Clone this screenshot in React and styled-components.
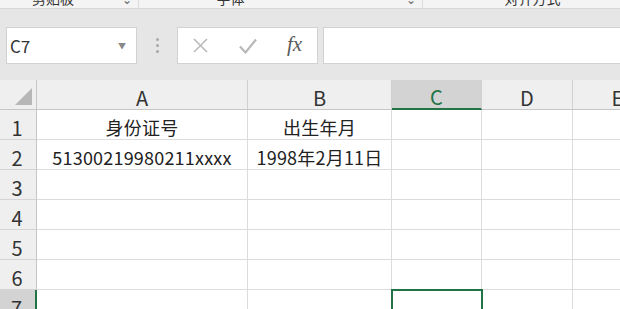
import styled, { createGlobalStyle } from 'styled-components';

const GlobalStyle = createGlobalStyle`
    body {
        margin: 0;
        overflow: hidden;
        background: #ffffff;
        font-family: "Noto Sans CJK SC", "Liberation Sans", sans-serif;
    }
`;

const Page = styled.div`
    width: 620px;
    height: 309px;
    overflow: hidden;
    background: #e6e6e6;
`;

const RibbonStrip = styled.div`
    display: flex;
    height: 8px;
    overflow: hidden;
    background: #f4f4f4;
    border-bottom: 1px solid #d6d6d6;
`;

const RibbonGroup = styled.div`
    position: relative;
    flex: 0 0 ${props => props.width}px;
    display: flex;
    justify-content: center;
    border-right: 1px solid #dcdcdc;
    span {
        margin-top: -10px;
        margin-left: ${props => props.shift || 0}px;
        font-size: 14px;
        line-height: 16px;
        color: #333;
    }
    i {
        position: absolute;
        right: 6px;
        top: -9px;
        font-style: normal;
        font-size: 12px;
        line-height: 16px;
        color: #666;
    }
`;

const Toolbar = styled.div`
    display: flex;
    align-items: stretch;
    height: 37px;
    padding: 18px 0 16px 6px;
`;

const NameBox = styled.div`
    width: 131px;
    box-sizing: border-box;
    display: flex;
    align-items: center;
    justify-content: space-between;
    padding: 0 10px 0 3px;
    background: #ffffff;
    border: 1px solid #d2d2d2;
    font-size: 17px;
    color: #333;
    span { font-size: 8px; color: #888; }
`;

const Dots = styled.div`
    width: 40px;
    display: flex;
    flex-direction: column;
    align-items: center;
    justify-content: center;
    gap: 3px;
    b {
        width: 3px;
        height: 3px;
        border-radius: 50%;
        background: #a8a8a8;
    }
`;

const FuncBox = styled.div`
    width: 141px;
    box-sizing: border-box;
    display: flex;
    align-items: center;
    gap: 31px;
    padding-left: 15px;
    background: #ffffff;
    border: 1px solid #d2d2d2;
    svg { flex: none; }
`;

const Fx = styled.span`
    font-family: "Liberation Serif", serif;
    font-style: italic;
    font-size: 21px;
    color: #5a5a5a;
    margin-left: -1px;
    margin-top: -2px;
`;

const FormulaBar = styled.div`
    flex: 1;
    margin-left: 5px;
    background: #ffffff;
    border: 1px solid #d2d2d2;
    border-right: none;
`;

const Sheet = styled.div`
    display: grid;
    grid-template-columns: 37px 211px 144px 90px 91px 90px;
    grid-auto-rows: 30px;
    background: #ffffff;
`;

const ColHead = styled.div`
    box-sizing: border-box;
    display: flex;
    align-items: center;
    justify-content: center;
    padding-top: 5px;
    background: ${props => props.active ? '#d3d3d3' : '#efefef'};
    border-right: 1px solid #d0d0d0;
    border-bottom: ${props => props.active ? '2px solid #217346' : '1px solid #c6c6c6'};
    font-size: 20px;
    color: ${props => props.active ? '#217346' : '#333'};
`;

const Corner = styled.div`
    box-sizing: border-box;
    display: flex;
    align-items: flex-end;
    justify-content: flex-end;
    padding: 0 4px 4px 0;
    background: #efefef;
    border-right: 1px solid #c6c6c6;
    border-bottom: 1px solid #c6c6c6;
`;

const RowHead = styled.div`
    box-sizing: border-box;
    display: flex;
    align-items: center;
    justify-content: center;
    padding: 5px 2px 0 0;
    background: ${props => props.active ? '#d3d3d3' : '#efefef'};
    border-right: ${props => props.active ? '2px solid #217346' : '1px solid #c6c6c6'};
    border-bottom: 1px solid #d4d4d4;
    font-size: 20px;
    color: #333;
`;

const Cell = styled.div`
    box-sizing: border-box;
    display: flex;
    align-items: center;
    justify-content: center;
    padding-top: 4px;
    border-right: 1px solid #dcdcdc;
    border-bottom: 1px solid #dcdcdc;
    font-size: 18px;
    letter-spacing: 0.2px;
    color: #222;
    white-space: nowrap;
    position: relative;
    outline: ${props => props.selected ? '2px solid #217346' : 'none'};
    outline-offset: -1px;
    z-index: ${props => props.selected ? 1 : 0};
`;

const cols = ['A', 'B', 'C', 'D', 'E'];
const data = {
    1: ['身份证号', '出生年月'],
    2: ['51300219980211xxxx', '1998年2月11日'],
};

export default function App() {
    return (
        <Page>
            <GlobalStyle />
            <RibbonStrip>
                <RibbonGroup width={138} shift={-32}><span>剪贴板</span><i>⌄</i></RibbonGroup>
                <RibbonGroup width={283} shift={-100}><span>字体</span><i>⌄</i></RibbonGroup>
                <RibbonGroup width={199} shift={20}><span>对齐方式</span></RibbonGroup>
            </RibbonStrip>
            <Toolbar>
                <NameBox>C7<span>▼</span></NameBox>
                <Dots><b /><b /><b /></Dots>
                <FuncBox>
                    <svg width="15" height="15" viewBox="0 0 15 15">
                        <path d="M1 1 L14 14 M14 1 L1 14" stroke="#b8b8b8" strokeWidth="1.5" fill="none" />
                    </svg>
                    <svg width="18" height="16" viewBox="0 0 18 16">
                        <path d="M1 8.5 L6.5 14.5 L17 1.5" stroke="#b8b8b8" strokeWidth="2.2" fill="none" />
                    </svg>
                    <Fx>fx</Fx>
                </FuncBox>
                <FormulaBar />
            </Toolbar>
            <Sheet>
                <Corner>
                    <svg width="17" height="17" viewBox="0 0 17 17">
                        <path d="M17 0 L17 17 L0 17 Z" fill="#b7b7b7" />
                    </svg>
                </Corner>
                {cols.map(c => <ColHead key={c} active={c === 'C'}>{c}</ColHead>)}
                {[1, 2, 3, 4, 5, 6, 7].map(r => [
                    <RowHead key={'h' + r} active={r === 7}>{r}</RowHead>,
                    ...cols.map((c, i) => (
                        <Cell key={c + r} selected={r === 7 && c === 'C'}>
                            {data[r] ? data[r][i] : ''}
                        </Cell>
                    )),
                ])}
            </Sheet>
        </Page>
    );
}
